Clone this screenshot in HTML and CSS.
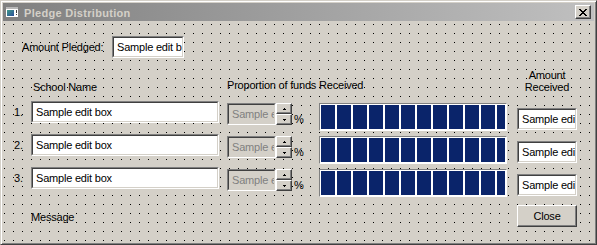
FILE: index.html
```html
<!DOCTYPE html>
<html>
<head>
<meta charset="utf-8">
<title>Pledge Distribution</title>
<link rel="stylesheet" href="styles.css">
</head>
<body>
<div class="window">
  <div class="titlebar">
    <svg class="app-icon" width="16" height="16" viewBox="0 0 16 16" shape-rendering="crispEdges">
      <defs>
        <linearGradient id="ig" x1="0" y1="0" x2="1" y2="1">
          <stop offset="0" stop-color="#3f9a8a"/>
          <stop offset="1" stop-color="#2a4f9a"/>
        </linearGradient>
      </defs>
      <rect x="0" y="2" width="14" height="12" fill="#808080"/>
      <rect x="1" y="3" width="12" height="2" fill="#b8b8b8"/>
      <rect x="1" y="5" width="12" height="8" fill="#ffffff"/>
      <rect x="2" y="6" width="7" height="6" fill="url(#ig)"/>
      <rect x="11" y="6" width="1" height="3" fill="#404040"/>
      <rect x="11" y="10" width="1" height="1" fill="#404040"/>
    </svg>
    <span class="title">Pledge Distribution</span>
    <div class="caption-btn">
      <svg class="close-glyph" width="8" height="7" viewBox="0 0 8 7" shape-rendering="crispEdges">
        <path fill="#000" d="M0 0h2v1H0z M6 0h2v1H6z M1 1h2v1H1z M5 1h2v1H5z M2 2h4v1H2z M3 3h2v1H3z M2 4h4v1H2z M1 5h2v1H1z M5 5h2v1H5z M0 6h2v1H0z M6 6h2v1H6z"/>
      </svg>
    </div>
  </div>

  <div class="client">
    <div class="pledged-row">
      <span class="pledged-label">Amount Pledged:</span>
      <div class="edit edit-pledged"><div class="edit-inner">Sample edit b</div></div>
    </div>

    <div class="headers">
      <span class="hdr-school">School Name</span>
      <span class="hdr-prop">Proportion of funds Received</span>
      <span class="hdr-amount">Amount<br>Received</span>
    </div>

    <div class="rows">
      <div class="row">
        <span class="num">1.</span>
        <div class="edit edit-name"><div class="edit-inner">Sample edit box</div></div>
        <div class="prop-group">
          <div class="edit edit-prop disabled"><div class="edit-inner">Sample e</div></div>
          <div class="spin">
            <div class="spin-btn"><svg width="3" height="2" viewBox="0 0 3 2" shape-rendering="crispEdges"><path d="M1 0h1v1H1z M0 1h3v1H0z" fill="#000"/></svg></div>
            <div class="spin-btn"><svg width="3" height="2" viewBox="0 0 3 2" shape-rendering="crispEdges"><path d="M0 0h3v1H0z M1 1h1v1H1z" fill="#000"/></svg></div>
          </div>
          <span class="pct">%</span>
        </div>
        <div class="bar"><div class="bar-fill"></div></div>
        <div class="edit edit-amount"><div class="edit-inner">Sample edi</div></div>
      </div>

      <div class="row">
        <span class="num">2.</span>
        <div class="edit edit-name"><div class="edit-inner">Sample edit box</div></div>
        <div class="prop-group">
          <div class="edit edit-prop disabled"><div class="edit-inner">Sample e</div></div>
          <div class="spin">
            <div class="spin-btn"><svg width="3" height="2" viewBox="0 0 3 2" shape-rendering="crispEdges"><path d="M1 0h1v1H1z M0 1h3v1H0z" fill="#000"/></svg></div>
            <div class="spin-btn"><svg width="3" height="2" viewBox="0 0 3 2" shape-rendering="crispEdges"><path d="M0 0h3v1H0z M1 1h1v1H1z" fill="#000"/></svg></div>
          </div>
          <span class="pct">%</span>
        </div>
        <div class="bar"><div class="bar-fill"></div></div>
        <div class="edit edit-amount"><div class="edit-inner">Sample edi</div></div>
      </div>

      <div class="row">
        <span class="num">3.</span>
        <div class="edit edit-name"><div class="edit-inner">Sample edit box</div></div>
        <div class="prop-group">
          <div class="edit edit-prop disabled"><div class="edit-inner">Sample e</div></div>
          <div class="spin">
            <div class="spin-btn"><svg width="3" height="2" viewBox="0 0 3 2" shape-rendering="crispEdges"><path d="M1 0h1v1H1z M0 1h3v1H0z" fill="#000"/></svg></div>
            <div class="spin-btn"><svg width="3" height="2" viewBox="0 0 3 2" shape-rendering="crispEdges"><path d="M0 0h3v1H0z M1 1h1v1H1z" fill="#000"/></svg></div>
          </div>
          <span class="pct">%</span>
        </div>
        <div class="bar"><div class="bar-fill"></div></div>
        <div class="edit edit-amount"><div class="edit-inner">Sample edi</div></div>
      </div>
    </div>

    <div class="footer">
      <span class="message">Message</span>
      <div class="btn btn-close">Close</div>
    </div>
  </div>
</div>
</body>
</html>
```

FILE: styles.css
```css
* {
  box-sizing: border-box;
}

html,
body {
  margin: 0;
  padding: 0;
}

body {
  background: #d4d0c8;
  font-family: "Liberation Sans", Arial, sans-serif;
  font-size: 11px;
  letter-spacing: -0.2px;
  color: #000;
}

/* ---------- window frame ---------- */
.window {
  width: 597px;
  height: 245px;
  display: flex;
  flex-direction: column;
  padding: 2px;
  background: #d4d0c8;
  border: 1px solid;
  border-color: #d4d0c8 #404040 #404040 #d4d0c8;
  box-shadow: inset 1px 1px #ffffff, inset -1px -1px #808080;
}

.titlebar {
  flex: none;
  height: 18px;
  margin-bottom: 1px;
  display: flex;
  align-items: flex-start;
  background: linear-gradient(to right, #808080, #c0c0c0);
}

.app-icon {
  display: block;
  flex: none;
  margin: 1px 0 0 2px;
}

.title {
  margin: 4px 0 0 3px;
  line-height: 13px;
  font-weight: bold;
  letter-spacing: 0.3px;
  color: #d4d0c8;
  white-space: nowrap;
}

.caption-btn {
  flex: none;
  width: 16px;
  height: 14px;
  margin: 2px 3px 0 auto;
  background: #d4d0c8;
  border: 1px solid;
  border-color: #ffffff #404040 #404040 #ffffff;
  box-shadow: inset -1px -1px #808080;
}

.close-glyph {
  display: block;
  margin: 3px 0 0 3px;
}

/* ---------- client area with design grid ---------- */
.client {
  flex: 1;
  background-color: #d4d0c8;
  background-image: conic-gradient(at 1px 1px, transparent 0deg 270deg, #000 270deg 360deg);
  background-size: 9px 9px;
  background-position: 1px 2px;
}

/* ---------- edits ---------- */
.edit {
  height: 22px;
  background: #ffffff;
  border: 1px solid;
  border-color: #808080 #ffffff #ffffff #808080;
}

.edit-inner {
  height: 100%;
  border: 1px solid;
  border-color: #404040 #d4d0c8 #d4d0c8 #404040;
  padding-left: 3px;
  line-height: 18px;
  white-space: nowrap;
  overflow: hidden;
}

.edit.disabled {
  background: #d4d0c8;
  color: #808080;
}

/* ---------- Amount pledged ---------- */
.pledged-row {
  display: flex;
  align-items: center;
  margin-top: 14px;
  padding-left: 19px;
}

.pledged-label {
  width: 90px;
  line-height: 13px;
  white-space: nowrap;
}

.edit-pledged {
  width: 72px;
}

/* ---------- column headers ---------- */
.headers {
  display: flex;
  align-items: flex-start;
  height: 32px;
  margin-top: 11px;
}

.hdr-school {
  width: 194px;
  margin: 12px 0 0 30px;
  line-height: 13px;
  white-space: nowrap;
}

.hdr-prop {
  width: 290px;
  margin-top: 10px;
  line-height: 13px;
  white-space: nowrap;
}

.hdr-amount {
  width: 60px;
  line-height: 12px;
  text-align: center;
}

/* ---------- rows ---------- */
.row {
  display: flex;
  align-items: flex-start;
  height: 33px;
}

.num {
  width: 28px;
  padding-left: 11px;
  line-height: 22px;
}

.edit-name {
  width: 188px;
}

.prop-group {
  width: 92px;
  margin-left: 8px;
  display: flex;
  align-items: flex-start;
}

.edit-prop {
  width: 49px;
  margin-top: 2px;
}

.spin {
  width: 16px;
  height: 22px;
  margin-top: 2px;
  display: flex;
  flex-direction: column;
}

.spin-btn {
  height: 11px;
  display: flex;
  align-items: center;
  justify-content: center;
  background: #d4d0c8;
  border: 1px solid;
  border-color: #ffffff #404040 #404040 #ffffff;
  box-shadow: inset -1px -1px #808080;
}

.spin-btn svg {
  display: block;
}

.pct {
  margin: 12px 0 0 2px;
  line-height: 13px;
}

.bar {
  width: 188px;
  height: 28px;
  margin-top: 2px;
  padding: 1px;
  background: #ffffff;
  border: 1px solid;
  border-color: #808080 #ffffff #ffffff #808080;
}

.bar-fill {
  height: 100%;
  background: repeating-linear-gradient(to right, #0a246a 0 14px, transparent 14px 16px);
}

.edit-amount {
  width: 60px;
  margin: 7px 0 0 10px;
}

/* ---------- footer ---------- */
.footer {
  display: flex;
  align-items: flex-start;
  margin-top: 5px;
}

.message {
  margin: 6px 0 0 28px;
  line-height: 13px;
}

.btn {
  display: flex;
  align-items: center;
  justify-content: center;
  background: #d4d0c8;
  border: 1px solid;
  border-color: #ffffff #404040 #404040 #ffffff;
  box-shadow: inset -1px -1px #808080;
}

.btn-close {
  width: 60px;
  height: 22px;
  margin: 0 17px 0 auto;
  line-height: 13px;
}
```
